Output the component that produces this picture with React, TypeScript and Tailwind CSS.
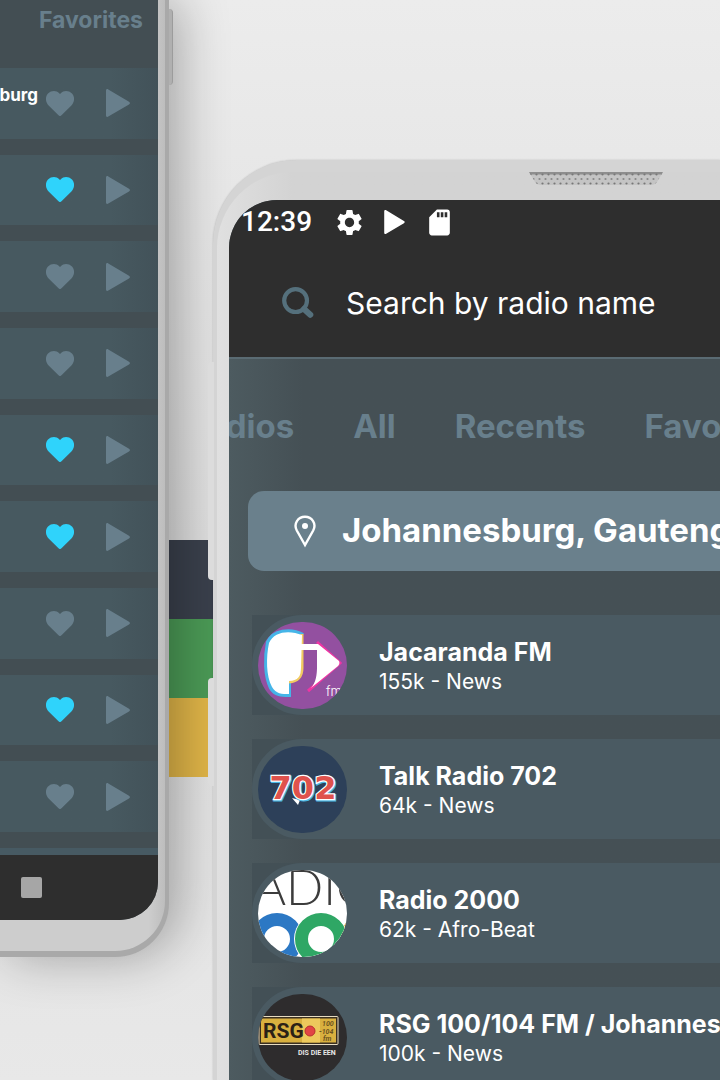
import type { ReactNode } from "react";
import { MdSdCard, MdSettings } from "react-icons/md";

const favorites = [
  { id: 1, name: "RSG 100/104 FM / Johannesburg", liked: false },
  { id: 2, name: "", liked: true },
  { id: 3, name: "", liked: false },
  { id: 4, name: "", liked: false },
  { id: 5, name: "", liked: true },
  { id: 6, name: "", liked: true },
  { id: 7, name: "", liked: false },
  { id: 8, name: "", liked: true },
  { id: 9, name: "", liked: false },
];

const tabs = ["Radios", "All", "Recents", "Favorites"];

function Heart({ liked }: { liked: boolean }) {
  return (
    <svg
      viewBox="0 0 28 25"
      className={liked ? "w-7 fill-[#2fd3fb]" : "w-7 fill-[#687f8c]"}
    >
      <path d="M14 25C13.3 25 12.6 24.3 12 23.7L2.6 14.4C-.8 10.9-.9 5.6 2 2.5C5.2-.7 10.4-.8 13.2 2.2L14 3.1L14.8 2.2C17.6-.8 22.8-.7 26 2.5C28.9 5.6 28.8 10.9 25.4 14.4L16 23.7C15.4 24.3 14.7 25 14 25Z" />
    </svg>
  );
}

function Play({ className }: { className: string }) {
  return (
    <svg viewBox="0 0 24 28" className={className}>
      <path d="M0 1.6C0 .3 1.2-.3 2.3.4L23 12.8C24.3 13.6 24.3 14.6 23 15.4L2.3 27.6C1.2 28.3 0 27.7 0 26.4Z" />
    </svg>
  );
}

function SearchIcon() {
  return (
    <svg viewBox="0 0 32 32" className="w-8 h-8 shrink-0" fill="none" stroke="#55707c">
      <circle cx="13.6" cy="13.6" r="11.4" strokeWidth="4.2" />
      <path d="M22 22L28.3 27.8" strokeWidth="6" strokeLinecap="round" />
    </svg>
  );
}

function Pin() {
  return (
    <svg viewBox="0 0 22 33" className="w-[22px] shrink-0" fill="none">
      <path
        d="M11 30L2.8 15.5C-.8 8.5 4 1.8 11 1.8S22.8 8.5 19.2 15.5Z"
        stroke="white"
        strokeWidth="2.4"
      />
      <circle cx="11" cy="11" r="3" fill="white" />
    </svg>
  );
}

function JacarandaLogo() {
  return (
    <svg viewBox="0 0 89 87" className="w-full h-full bg-[#9350a0]">
      <path d="M45 13C32 6 15 9 10 20C7 35 7 54 13 66C17 73 24 73 31 73V60" fill="none" stroke="#45b5e8" strokeWidth="4" />
      <path d="M44 12V46C44 54 41 59 31 60" fill="none" stroke="#f1cb61" strokeWidth="3" />
      <path d="M44 13C32 8 16 9 11 21C8 35 8 54 14 65C18 72 24 72 31 72V59C40 59 43 54 43 46Z" fill="white" />
      <path d="M59 20L82 41L50 69" fill="none" stroke="#ef35a3" strokeWidth="3" />
      <path d="M43 22H60L81 39C82 41 81 43 80 44L53 66C58 61 59 52 59 45V28H43Z" fill="white" />
      <text x="68" y="74" className="fill-white font-['Inter',sans-serif] text-[13px] font-light">
        fm
      </text>
    </svg>
  );
}

function TalkRadioLogo() {
  return (
    <svg viewBox="0 0 89 87" className="w-full h-full bg-[#2d4059]">
      <g className="font-['DejaVu_Sans',sans-serif] text-[32px] font-bold" textAnchor="middle">
        <path d="M34 52L40 59L42 54Z" fill="white" />
        <text x="46" y="54" fill="#4ab8e5" stroke="#4ab8e5" strokeWidth="3">
          702
        </text>
        <text x="45" y="53" fill="#df524d" stroke="white" strokeWidth="2.5" paintOrder="stroke">
          702
        </text>
      </g>
    </svg>
  );
}

function Radio2000Logo() {
  return (
    <svg viewBox="0 0 89 87" className="w-full h-full bg-white">
      <text x="-4" y="35" className="fill-[#3c3c3c] font-['Lato',sans-serif] text-[49px] font-light">
        ADIO
      </text>
      <circle cx="19" cy="69" r="19.5" fill="none" stroke="#2c78c4" strokeWidth="13" />
      <circle cx="109" cy="69" r="20" fill="none" stroke="#eeb030" strokeWidth="13" />
      <circle cx="63" cy="69" r="27" fill="white" />
      <circle cx="63" cy="69" r="19.5" fill="none" stroke="#2fa765" strokeWidth="13" />
    </svg>
  );
}

function RsgLogo() {
  return (
    <svg viewBox="0 0 89 87" className="w-full h-full bg-[#2e2c2d]">
      <rect x="1" y="22.5" width="79" height="28" rx="1" fill="#3a2f20" stroke="#e8dcc0" strokeWidth="1" />
      <rect x="3" y="24.5" width="75" height="24" fill="#d9b03f" />
      <rect x="44" y="24.5" width="18" height="24" fill="#edc95c" />
      <text x="5" y="44" className="fill-[#2b2116] font-['Roboto',sans-serif] text-[21px] font-bold">
        RSG
      </text>
      <circle cx="52" cy="37" r="5" fill="#e24545" stroke="#b6322f" strokeWidth="1" />
      <g className="fill-[#6b5220] font-['Roboto',sans-serif] text-[7px] font-bold italic">
        <text x="64" y="32">100</text>
        <text x="61" y="40">-104</text>
        <text x="65" y="47">fm</text>
      </g>
      <text x="40" y="61" className="fill-[#e8e8e8] font-['Roboto',sans-serif] text-[7px] font-bold">
        DIS DIE EEN
      </text>
    </svg>
  );
}

const stations: { name: string; info: string; logo: ReactNode }[] = [
  { name: "Jacaranda FM", info: "155k - News", logo: <JacarandaLogo /> },
  { name: "Talk Radio 702", info: "64k - News", logo: <TalkRadioLogo /> },
  { name: "Radio 2000", info: "62k - Afro-Beat", logo: <Radio2000Logo /> },
  { name: "RSG 100/104 FM / Johannesburg", info: "100k - News", logo: <RsgLogo /> },
];

function Speaker() {
  return (
    <svg viewBox="0 0 134 14" className="w-[134px] h-3.5">
      <defs>
        <pattern id="mesh" width="6" height="9" patternUnits="userSpaceOnUse">
          <rect width="6" height="9" fill="#c4c4c4" />
          <circle cx="1.5" cy="2.5" r="1.1" fill="#777" />
          <circle cx="4.5" cy="7" r="1.1" fill="#888" />
        </pattern>
      </defs>
      <path d="M0 0H134L128 10Q126 13 122 13H12Q8 13 6 10Z" fill="url(#mesh)" />
      <path d="M0 0H134L132.5 2.5H1.5Z" fill="#777" fillOpacity=".7" />
    </svg>
  );
}

function FavoritesPhone() {
  return (
    <section className="relative z-10 w-[169px] shrink-0 self-start flex flex-col min-h-[957px] rounded-br-[54px] bg-[#a9a9a9] pr-1 pb-[6px] shadow-[10px_0_50px_rgba(0,0,0,0.3)]">
      <span className="absolute -right-1 top-[9px] w-1 h-[76px] rounded-r-sm bg-[#b0b0b0] border-r border-[#9c9c9c]" />
      <div className="flex-1 flex flex-col rounded-br-[50px] bg-linear-to-r from-[#cdcdcd] from-90% to-[#bdbdbd] pr-[7px] pb-[31px]">
        <div className="flex-1 flex flex-col overflow-hidden rounded-br-[38px] bg-[#434e53]">
          <h2 className="h-[68px] pt-1.5 pr-[15px] text-right text-[23px] leading-7 font-bold text-[#687f8c]">
            Favorites
          </h2>
          <ul className="flex-1 grid grid-cols-1 auto-rows-fr gap-4 pb-4">
            {favorites.map((item) => (
              <li
                key={item.id}
                className="min-w-0 flex items-center justify-end pr-7 bg-linear-to-r from-[#475960] from-70% to-[#425259]"
              >
                <span className="pb-4 pr-2 text-[17px] leading-5 font-bold text-white whitespace-nowrap">
                  {item.name}
                </span>
                <button aria-label="Favorite" className="mr-8 shrink-0">
                  <Heart liked={item.liked} />
                </button>
                <button aria-label="Play" className="shrink-0">
                  <Play className="w-6 fill-[#687f8c]" />
                </button>
              </li>
            ))}
          </ul>
          <div className="h-[7px] bg-[#475a63]" />
          <div className="h-[65px] pl-[21px] flex items-center bg-[#2e2e2e]">
            <button aria-label="Recent apps" className="w-[21px] h-[21px] rounded-xs bg-[#a6a6a6]" />
          </div>
        </div>
      </div>
    </section>
  );
}

function StationsPhone() {
  return (
    <section className="relative z-20 flex-1 min-w-0 flex flex-col mt-40 pl-1 pt-3 rounded-tl-[84px] bg-[#d4d4d4] shadow-[0_0_2px_rgba(0,0,0,0.2)]">
      <span className="absolute -left-[5px] top-[202px] w-[6px] h-[218px] rounded-l-sm bg-[#dcdcdc]" />
      <span className="absolute -left-[5px] top-[518px] w-[6px] h-[108px] rounded-l-sm bg-[#dcdcdc]" />
      <div className="flex-1 min-w-0 flex flex-col pl-3 rounded-tl-[76px] bg-linear-to-r from-[#e0e0e0] to-[#d3d3d3] to-15%">
        <div className="h-7 pl-[300px]">
          <Speaker />
        </div>
        <div className="flex-1 overflow-hidden rounded-tl-[48px] bg-linear-to-r from-[#4d5b60] to-[#455055] to-15%">
          <header className="bg-[#2e2e2e] border-b-2 border-[#5a6b73]">
            <div className="h-11 pl-3 flex items-center text-white">
              <time className="mr-[22px] font-['Roboto',sans-serif] text-[28px] leading-8 font-medium">
                12:39
              </time>
              <div className="flex items-center gap-3.5">
                <MdSettings className="w-[31px] h-[31px]" />
                <Play className="w-[31px] h-6 fill-white" />
                <MdSdCard className="w-[31px] h-[31px]" />
              </div>
            </div>
            <label className="h-[113px] pl-[53px] pt-1 flex items-center gap-8">
              <SearchIcon />
              <input
                type="search"
                aria-label="Search by radio name"
                placeholder="Search by radio name"
                className="flex-1 min-w-0 h-12 bg-transparent text-[30px] outline-none placeholder:text-white"
              />
            </label>
          </header>

          <nav className="h-[132px] pt-1 -ml-11 flex items-center gap-[59px] text-[33px] font-bold text-[#687f8c]">
            {tabs.map((tab) => (
              <button key={tab}>{tab}</button>
            ))}
          </nav>

          <button className="w-full ml-[19px] h-20 pl-[46px] flex items-center gap-[26px] rounded-2xl bg-[#6a808c] text-[33px] font-bold text-white whitespace-nowrap">
            <Pin />
            Johannesburg, Gauteng
          </button>

          <ul className="mt-11 ml-[23px] flex flex-col gap-6">
            {stations.map((station) => (
              <li key={station.name} className="bg-[#435056]">
                <div className="h-[100px] pl-1.5 flex items-center gap-8 rounded-l-full bg-[#4a5a62]">
                  <div className="w-[89px] h-[87px] shrink-0 overflow-hidden rounded-full">
                    {station.logo}
                  </div>
                  <div className="pt-1 leading-[29px] text-white whitespace-nowrap">
                    <h3 className="text-[25px] font-bold">{station.name}</h3>
                    <p className="text-[21px]">{station.info}</p>
                  </div>
                </div>
              </li>
            ))}
          </ul>
        </div>
      </div>
    </section>
  );
}

export default function App() {
  return (
    <main className="flex h-screen overflow-hidden bg-linear-to-b from-[#ececec] via-[#dedede] to-[#e8e8e8] font-['Inter',sans-serif]">
      <FavoritesPhone />
      <div className="relative w-11 shrink-0 pt-[540px]">
        <div className="h-[79px] bg-[#3a404c]" />
        <div className="h-[79px] bg-[#4b9a56]" />
        <div className="h-[79px] bg-[#e0b548]" />
      </div>
      <StationsPhone />
    </main>
  );
}
